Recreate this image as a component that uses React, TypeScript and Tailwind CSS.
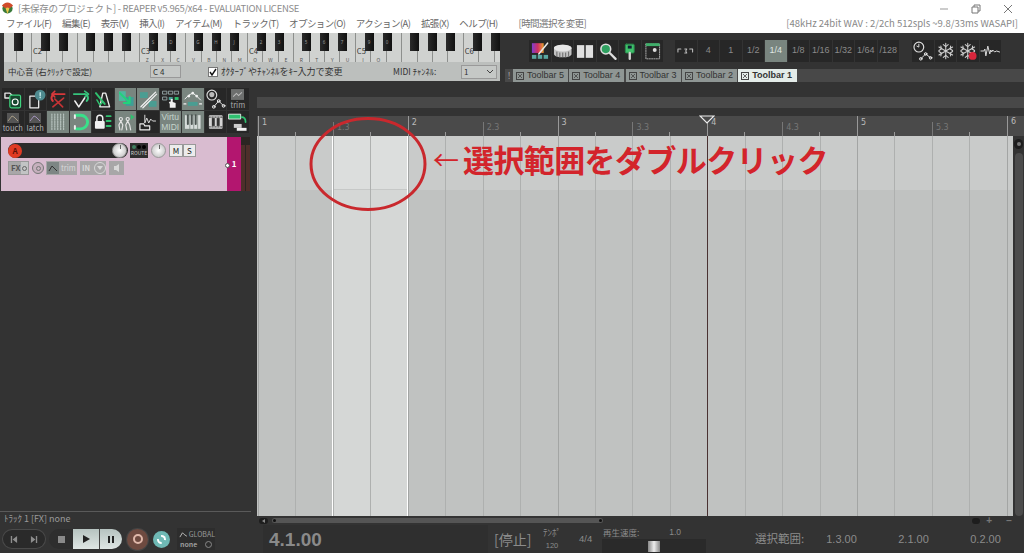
import React from "react";

const jp = { fontFamily: '"Noto Sans CJK JP","Noto Sans",sans-serif' };
const lib = { fontFamily: '"Liberation Sans",sans-serif' };

const menus = ["ファイル(F)", "編集(E)", "表示(V)", "挿入(I)", "アイテム(M)", "トラック(T)", "オプション(O)", "アクション(A)", "拡張(X)", "ヘルプ(H)"];

const whiteLetters: Record<number, string> = { 9: "Z", 10: "X", 11: "C", 12: "V", 13: "B", 14: "N", 15: "M", 16: "Q", 17: "W", 18: "E", 19: "R", 20: "T", 21: "Y", 22: "U", 23: "I", 24: "O" };
const octaveLabels: Record<number, string> = { 2: "C2", 9: "C3", 16: "C4", 23: "C5", 30: "C6" };
const blackKeys: [number, string][] = [
  [14, ""], [41, ""], [59, ""], [86, ""], [104, ""], [122, ""], [149, "S"], [167, "D"], [194, "G"], [212, "H"], [230, "J"], [257, "2"], [275, "3"], [302, "5"], [320, "6"], [338, "7"], [365, "9"], [383, "0"], [410, ""], [428, ""], [446, ""], [473, ""], [491, ""],
];

function Keyboard() {
  return (
    <div className="relative flex h-[29px] w-[496px] overflow-hidden bg-[#d2d4d2]">
      {Array.from({ length: 32 }).map((_, i) => (
        <div key={i} className={`relative h-full shrink-0 border-r border-[#8d8f8d] bg-[#d0d2d0] ${i === 0 ? "w-[12.57px]" : "w-[15.43px]"}`}>
          {octaveLabels[i] && <span className="absolute left-[1px] top-[14px] text-[7.5px] leading-[7px] text-[#333]" style={jp}>{octaveLabels[i]}</span>}
          {whiteLetters[i] && <span className="absolute bottom-0 left-0 w-full text-center text-[5px] leading-[5px] text-[#555]" style={jp}>{whiteLetters[i]}</span>}
        </div>
      ))}
      {blackKeys.map(([x, l]) => (
        <div key={x} className="absolute top-0 flex h-[18px] w-[9px] items-center justify-center bg-linear-to-r from-[#2b2b2b] to-[#111] text-[4.5px] text-[#999]" style={{ left: x - 4.5 }}>{l}</div>
      ))}
    </div>
  );
}

function Btn({ lit, children, w = "w-[22.5px]" }: { lit?: boolean; children?: React.ReactNode; w?: string }) {
  return (
    <div className={`flex h-[22px] shrink-0 items-center justify-center border-r border-[#333] ${w} ${lit ? "bg-[#79857f]" : "bg-[#272727]"}`}>
      {children}
    </div>
  );
}

function S({ children }: { children: React.ReactNode }) {
  return <svg viewBox="0 0 22 22" className="h-[22px] w-[22px]" fill="none" strokeLinecap="round" strokeLinejoin="round">{children}</svg>;
}

const row1 = [
  <S><path d="M3 5h5l2 2v3H3z" fill="none" stroke="#e8e8e8" strokeWidth="1.4" /><rect x="8" y="7" width="11" height="13" rx="1.5" fill="#17472f" stroke="#3fd17d" strokeWidth="1.2" /><circle cx="13.5" cy="14" r="3" stroke="#fff" strokeWidth="1.2" /></S>,
  <S><path d="M5 8h6l3 3v9H5z" fill="#2a2a2a" stroke="#eee" strokeWidth="1.3" /><circle cx="15.5" cy="7" r="5.5" fill="#4e8a8f" /><path d="M15.5 4.5v3M15.5 9v.6" stroke="#dff" strokeWidth="1.2" /></S>,
  <S><path d="M18 6H9a4 4 0 0 0-3 7" stroke="#d8393b" strokeWidth="2" /><path d="M8 3 5 6l3 3" stroke="#d8393b" strokeWidth="1.6" /><path d="m6 19 11-9M8 11l8 8" stroke="#c43335" strokeWidth="1.7" /></S>,
  <S><path d="M4 6h10a4 4 0 0 1 3 7" stroke="#36c47c" strokeWidth="2" /><path d="m15 3 4 3-4 3" stroke="#36c47c" strokeWidth="1.6" /><path d="m5 13 4 6 6-9" stroke="#eee" strokeWidth="1.6" /></S>,
  <S><path d="M11 5h3l4 14H8z" stroke="#eee" strokeWidth="1.4" /><path d="m4 5 9 11" stroke="#2fc06f" strokeWidth="2" /><path d="m5 12 3 5 3-3" stroke="#2fc06f" strokeWidth="1.5" /></S>,
  <S><rect x="4" y="3" width="7" height="10" fill="#4fb7a0" /><rect x="11" y="9" width="8" height="9" fill="#3d9f96" /><path d="m5 5 9 9M9 15h6V9" stroke="#22d37a" strokeWidth="2" /></S>,
  <S><rect x="3" y="4" width="8" height="6" fill="#4a9d92" /><rect x="12" y="13" width="8" height="6" fill="#4a9d92" /><path d="M4 19 19 4M6 20 20 6" stroke="#f2f2f2" strokeWidth="1.3" /></S>,
  <S><g fill="none" stroke="#9aa" strokeWidth=".9"><rect x="3" y="3" width="4" height="3" /><rect x="9" y="3" width="4" height="3" /><rect x="15" y="3" width="4" height="3" /><rect x="3" y="9" width="4" height="3" /></g><rect x="9" y="9" width="4" height="3" fill="#4a9d92" /><rect x="15" y="9" width="4" height="3" fill="#2fc06f" /><path d="M10 20v-4l-1-2 2-.5V11h2v3l3 1v5z" fill="#f1f1f1" /></S>,
  <S><path d="M3 11 7 7l4-2 4 3 4 4" stroke="#f1f1f1" strokeWidth="1" /><g fill="#f1f1f1"><circle cx="7" cy="8" r="1.4" /><circle cx="11" cy="5" r="1.4" /><circle cx="15" cy="8" r="1.4" /></g><rect x="6" y="14" width="10" height="4" fill="#4a9d92" /><path d="M2 16h2M18 16h2" stroke="#f1f1f1" strokeWidth="1.2" /></S>,
  <S><circle cx="7" cy="7" r="5" stroke="#ddd" strokeWidth="1.2" /><circle cx="7" cy="6.5" r="2.6" fill="#bbb" /><path d="M9 19 14 13l5 5" stroke="#ddd" strokeWidth="1" /><g fill="none" stroke="#eee" strokeWidth="1"><circle cx="9" cy="19" r="1.4" /><circle cx="14" cy="13" r="1.4" /><circle cx="19" cy="18" r="1.4" /></g></S>,
  <div className="flex flex-col items-center"><svg viewBox="0 0 12 10" className="h-[11px] w-[13px]"><rect width="12" height="10" fill="#6d6f6e" /><path d="m2 7 3-3 2 2 3-3" stroke="#bbb" fill="none" /></svg><span className="text-[7.5px] leading-[9px] text-[#aaa]" style={jp}>trim</span></div>,
];

function Env({ label, color }: { label: string; color: string }) {
  return (
    <div className="flex flex-col items-center">
      <svg viewBox="0 0 12 10" className="h-[10px] w-[12px]"><rect width="12" height="10" fill="#555" /><path d="m1 8 4-5 2 1 4 4" stroke={color} fill="none" /></svg>
      <span className="text-[7.5px] leading-[9px] text-[#b5b5b5]" style={jp}>{label}</span>
    </div>
  );
}

const row2: [boolean, React.ReactNode][] = [
  [false, <Env label="touch" color="#a59b84" />],
  [false, <Env label="latch" color="#a291bb" />],
  [true, <S>{[5, 8, 11, 14, 17].map((x) => <path key={x} d="M0 3v16" transform={`translate(${x} 0)`} stroke="#b8c4c0" strokeWidth="1.2" strokeDasharray="1.2 1.2" />)}</S>],
  [true, <S><path d="M6 4h5a6 6 0 0 1 0 14H6" stroke="#39e08a" strokeWidth="3" /><path d="M5 4v3M5 15v3" stroke="#eee" strokeWidth="2" /></S>],
  [false, <S><rect x="3" y="10" width="10" height="8" rx="1" fill="#f1f1f1" /><path d="M5 10V7a3 3 0 0 1 6 0v3" stroke="#f1f1f1" strokeWidth="1.5" /><path d="M15 5h4M15 10h4M15 15h4" stroke="#2fc06f" strokeWidth="2" /></S>],
  [true, <S><g stroke="#e4e4e4" strokeWidth="1.2"><circle cx="6" cy="8" r="1.6" /><path d="m6 10-2 4 1 5M6 10l2 4-1 5" /><circle cx="13" cy="8" r="1.6" /><path d="m13 10-2 4 1 5M13 10l2 4 1 5" /></g><path d="m16 3 4 3-4 3z" fill="#2fc06f" /></S>],
  [false, <S><path d="M8 4v8l2-5 2 5 2-4 2 2h3" stroke="#ddd" strokeWidth="1" /><path d="M3 19v-6h4l1 2h5v4z" stroke="#eee" strokeWidth="1.2" /></S>],
  [true, <div className="flex flex-col items-center text-[8.5px] leading-[10px] text-[#c4d4cc]" style={lib}><span>Virtu</span><span>MIDI</span></div>],
  [true, <S><rect x="3" y="4" width="16" height="14" fill="#d6dcda" />{[6, 10, 14].map((x) => <path key={x} d="M0 4v9" transform={`translate(${x} 0)`} stroke="#4c5552" strokeWidth="2" />)}{[8, 12, 16].map((x) => <path key={x} d="M0 4v14" transform={`translate(${x} 0)`} stroke="#79857f" strokeWidth=".8" />)}</S>],
  [false, <S><rect x="4" y="4" width="14" height="14" rx="1" fill="#d4d4d4" /><rect x="7" y="7" width="3" height="8" fill="#333" /><rect x="12" y="7" width="3" height="8" fill="#333" /><path d="M4 6h14M4 16h14" stroke="#333" strokeDasharray="1.5 1.5" /></S>],
  [false, <S><rect x="2" y="3" width="12" height="5" fill="#2fc06f" stroke="#fff" strokeWidth=".8" /><path d="M15 6c3 0 4 2 4 5" stroke="#2fc06f" strokeWidth="1.8" /><rect x="7" y="13" width="8" height="4" fill="#ccc" /><rect x="10" y="17" width="10" height="3" fill="#f2f2f2" /></S>],
];

const groupA = [
  <S><path d="M3 3h12v10H3z" fill="url(#rb)" /><defs><linearGradient id="rb" x1="0" x2="1"><stop stopColor="#7b3fd0" /><stop offset=".5" stopColor="#d02f60" /><stop offset="1" stopColor="#e6a030" /></linearGradient></defs><path d="m10 14 9-11" stroke="#e8e8e8" strokeWidth="1.6" /><g fill="#5aa7a0"><rect x="3" y="15" width="4.5" height="4" /><rect x="9" y="15" width="4.5" height="4" /><rect x="15" y="15" width="4.5" height="4" /></g></S>,
  <S><ellipse cx="11" cy="8" rx="9" ry="3.5" fill="#e2e2e2" /><path d="M2 8v6c0 2 4 3.5 9 3.5s9-1.5 9-3.5V8" fill="#c2c2c2" /><path d="M5 12v4M8 13v4M11 13v4M14 13v4M17 12v4" stroke="#666" /><ellipse cx="11" cy="8" rx="9" ry="3.5" fill="#e6e6e6" /></S>,
  <S><rect x="3" y="5" width="7.5" height="13" fill="#e0e0e0" /><rect x="12" y="5" width="7.5" height="13" fill="#e0e0e0" /></S>,
  <S><circle cx="9" cy="9" r="5" fill="#2fa060" stroke="#ddd" strokeWidth="1.6" /><path d="m13 13 6 6" stroke="#ddd" strokeWidth="2.4" /></S>,
  <S><rect x="6.5" y="4" width="9" height="9" rx="1" fill="#3fc06a" stroke="#2a8a4c" /><rect x="9" y="5.5" width="4" height="3" fill="#123" /><path d="M11 13v6" stroke="#d4d4d4" strokeWidth="2.4" /></S>,
  <S><rect x="4" y="4" width="14" height="15" stroke="#aaa" strokeDasharray="1.2 1.2" /><rect x="4" y="3" width="14" height="3" fill="#3fae6a" /><circle cx="13" cy="10" r="2" fill="#ddd" /></S>,
];

function Snow({ red }: { red?: boolean }) {
  return (
    <S>
      <g stroke="#cfcfcf" strokeWidth="1.1">
        <path d="M11 3v16M4 7l14 8M18 7 4 15" />
        <path d="m8.5 4.5 2.5 2 2.5-2M8.5 17.5l2.5-2 2.5 2M4 10.5 6.5 9 6 6M18 10.5 15.5 9l.5-3M4 11.5 6.5 13 6 16M18 11.5 15.5 13l.5 3" />
      </g>
      {red && <circle cx="16" cy="16" r="4" fill="#d8263c" />}
    </S>
  );
}

const groupC = [
  <S><circle cx="7" cy="7" r="5" stroke="#ddd" strokeWidth="1.2" /><path d="M7 4v3l-2-1" stroke="#ddd" /><path d="M9 19 14 14l5 4" stroke="#ddd" /><g stroke="#eee"><circle cx="9" cy="19" r="1.3" /><circle cx="14" cy="14" r="1.3" /><circle cx="19" cy="18" r="1.3" /></g></S>,
  <Snow />,
  <Snow red />,
  <S><path d="M1 11h3l1-2 1 7 2-10 2 8 1-4 1 2 1-2 2 2 2-1 3 1" stroke="#ddd" strokeWidth="1" /></S>,
];

const divs = ["4", "1", "1/2", "1/4", "1/8", "1/16", "1/32", "1/64", "/128"];
const tabs = ["Toolbar 5", "Toolbar 4", "Toolbar 3", "Toolbar 2"];

function TabBox() {
  return (
    <span className="relative mr-[3px] inline-block h-[8px] w-[8px] shrink-0 border border-[#444]">
      <svg viewBox="0 0 6 6" className="absolute inset-0 h-[6px] w-[6px]"><path d="m1 1 4 4M5 1 1 5" stroke="#444" strokeWidth=".8" /></svg>
    </span>
  );
}

function Header() {
  return (
    <header className="h-[33px] shrink-0 bg-white text-[#666]" style={jp}>
      <div className="flex h-[15px] items-center">
        <svg viewBox="0 0 14 14" className="ml-[1px] mt-[2px] h-[13px] w-[13px]">
          <circle cx="7" cy="7" r="5.5" fill="#3a7a3a" />
          <path d="M1 4a7 7 0 0 1 12 0L9 7a3 3 0 0 0-4 0z" fill="#d14b2a" />
          <path d="M5 7a2.5 2.5 0 0 1 4 0l-2 6z" fill="#e8c84a" />
        </svg>
        <span className="ml-[4px] mt-[3px] text-[9.5px] leading-none tracking-[-0.3px] text-[#8c8c8c]">[未保存のプロジェクト] - REAPER v5.965/x64 - EVALUATION LICENSE</span>
        <div className="ml-auto mr-[11px] mt-[3px] flex items-center gap-[22px]">
          <svg viewBox="0 0 10 10" className="h-[10px] w-[10px]"><path d="M1 5h8" stroke="#999" /></svg>
          <svg viewBox="0 0 10 10" className="h-[10px] w-[10px]"><path d="M1 3h6v6H1zM3 3V1h6v6H7" stroke="#777" fill="none" /></svg>
          <svg viewBox="0 0 10 10" className="h-[10px] w-[10px]"><path d="m1 1 8 8M9 1 1 9" stroke="#777" /></svg>
        </div>
      </div>
      <div className="flex h-[17px] items-center pl-[6px] pr-[6px] text-[9.5px] leading-none tracking-[-0.6px]">
        <div className="flex gap-[10.6px]">
          {menus.map((m) => <span key={m} className="whitespace-nowrap">{m}</span>)}
        </div>
        <span className="ml-[21px] text-[#777]">[時間選択を変更]</span>
        <span className="ml-auto whitespace-nowrap tracking-normal text-[#888]">[48kHz 24bit WAV : 2/2ch 512spls ~9.8/33ms WASAPI]</span>
      </div>
    </header>
  );
}

function TopBand() {
  return (
    <section className="flex h-[49px] shrink-0 bg-[#333]">
      <div className="ml-[4px] flex w-[496px] shrink-0 flex-col">
        <Keyboard />
        <div className="flex h-[19px] items-center bg-[#bcbfbd] pl-[4px] text-[8.5px] text-[#333]" style={jp}>
          <span className="w-[142px] whitespace-nowrap">中心音 (右ｸﾘｯｸで設定)</span>
          <span className="flex h-[13px] w-[31px] items-center border border-[#999] bg-[#c5c8c6] pl-[2px] text-[8px]">C 4</span>
          <span className="ml-[27px] flex h-[10px] w-[10px] items-center justify-center border border-[#777] bg-white">
            <svg viewBox="0 0 8 8" className="h-[8px] w-[8px]"><path d="m1 4 2 3 4-6" stroke="#111" strokeWidth="1.4" fill="none" /></svg>
          </span>
          <span className="ml-[3px] w-[172px] whitespace-nowrap text-[9px]">ｵｸﾀｰﾌﾞやﾁｬﾝﾈﾙをｷｰ入力で変更</span>
          <span className="w-[68px] whitespace-nowrap">MIDI ﾁｬﾝﾈﾙ:</span>
          <span className="flex h-[14px] w-[36px] items-center justify-between border border-[#999] bg-[#c5c8c6] px-[2px] text-[8px]">1
            <svg viewBox="0 0 8 5" className="h-[5px] w-[8px]"><path d="m1 1 3 3 3-3" stroke="#444" fill="none" /></svg>
          </span>
        </div>
      </div>
      <div className="ml-[5px] flex min-w-0 flex-1 flex-col">
        <div className="mt-[7px] flex pl-[24px]">
          <div className="flex">{groupA.map((g, i) => <Btn key={i}>{g}</Btn>)}</div>
          <div className="ml-[11px] flex">
            <Btn><S><path d="M3 9v3M3 9h3M10 9h2l-1 2 1 2h-2M15 9h3v3" stroke="#bbb" strokeWidth="1.1" /></S></Btn>
            {divs.map((d) => (
              <Btn key={d} lit={d === "1/4"}>
                <span className={`text-[9px] ${d === "1/4" ? "text-[#dfe6e2]" : "text-[#8a8a8a]"}`} style={lib}>{d}</span>
              </Btn>
            ))}
          </div>
          <div className="ml-[12px] flex">{groupC.map((g, i) => <Btn key={i}>{g}</Btn>)}</div>
        </div>
        <div className="mt-[7px] flex h-[13px] bg-[#484848] pl-[3px]">
          <span className="w-[5px] text-[8px] leading-[13px] text-[#aaa]">!</span>
          {tabs.map((t) => (
            <div key={t} className="mr-[1.3px] flex w-[55px] items-center whitespace-nowrap bg-[#8f9694] pl-[3px] text-[9px] text-[#333]" style={lib}>
              <TabBox />{t}
            </div>
          ))}
          <div className="flex w-[59px] items-center whitespace-nowrap bg-[#e4ece9] pl-[3px] text-[9px] font-bold text-[#333]" style={lib}>
            <TabBox />Toolbar 1
          </div>
        </div>
      </div>
    </section>
  );
}

function Knob() {
  return (
    <span className="relative block h-[15px] w-[15px] shrink-0 rounded-full border border-[#999] bg-radial from-[#fff] to-[#b8b8b8]">
      <span className="absolute left-1/2 top-[1px] h-[4px] w-px bg-[#666]" />
    </span>
  );
}

function Track() {
  return (
    <div className="ml-px mt-[4px] flex h-[54px] w-[250px]">
      <div className="flex w-[226px] flex-col bg-[#d9bcd0] pl-[7px] pt-[6px]">
        <div className="flex items-center">
          <div className="flex h-[15px] w-[120px] items-center justify-between rounded-full bg-[#2c2c2c] pr-[1px]">
            <span className="flex h-[14px] w-[14px] items-center justify-center rounded-full bg-[#e03b24] text-[8px] font-bold text-[#5a120a]" style={jp}>A</span>
            <Knob />
          </div>
          <div className="ml-[2px] flex h-[15px] w-[18px] flex-col items-center justify-center bg-[#2e2e2e]">
            <span className="flex gap-px"><i className="h-[4px] w-[4px] rounded-full bg-[#3f7f5f]" /><i className="h-[4px] w-[4px] rounded-full bg-black" /><i className="h-[4px] w-[4px] rounded-full bg-black" /></span>
            <span className="text-[5px] leading-[7px] text-[#ccc]" style={jp}>ROUTE</span>
          </div>
          <span className="ml-[3px]"><Knob /></span>
          <div className="ml-[3px] flex h-[13px]">
            <span className="flex w-[14px] items-center justify-center border border-[#999] bg-[#ececec] text-[8px] text-[#222]" style={jp}>M</span>
            <span className="flex w-[13px] items-center justify-center border border-[#999] bg-[#ececec] text-[8px] text-[#222]" style={jp}>S</span>
          </div>
        </div>
        <div className="mt-[3px] flex h-[14px] items-center">
          <div className="flex h-full w-[21px] items-center border border-[#999] bg-[#a8a7a8] text-[8px] font-bold text-[#555]" style={jp}>
            <span className="pl-[2px]">FX</span><span className="ml-px flex h-full flex-1 items-center justify-center bg-[#c2c4c4]"><i className="h-[5px] w-[5px] rounded-full border border-[#666]" /></span>
          </div>
          <span className="ml-[3px] flex h-[12px] w-[12px] items-center justify-center rounded-full border border-[#777] bg-[#c6b0bd]"><i className="h-[5px] w-[5px] rounded-full border border-[#777]" /></span>
          <div className="ml-[2px] flex h-full w-[31px] items-center bg-[#a8a7a8] text-[7.5px] text-[#d8d8d8]" style={jp}>
            <span className="ml-px flex h-[12px] w-[12px] items-center justify-center bg-[#7d8684]"><svg viewBox="0 0 10 8" className="h-[8px] w-[10px]"><path d="m1 7 3-5 2 2 3 3" stroke="#333" fill="none" /></svg></span>
            <span className="ml-[2px]">trim</span>
          </div>
          <div className="ml-[3px] flex h-full w-[26px] items-center justify-between bg-[#a8a7a8] pl-[2px] text-[7.5px] font-bold text-[#d8d8d8]" style={jp}>IN
            <span className="flex h-[12px] w-[12px] items-center justify-center rounded-full border border-[#d8d8d8]"><svg viewBox="0 0 8 6" className="h-[6px] w-[8px]"><path d="m1 1 3 4 3-4z" fill="#d8d8d8" /></svg></span>
          </div>
          <div className="ml-[3px] flex h-full w-[15px] items-center justify-center bg-[#a8a7a8]"><svg viewBox="0 0 10 10" className="h-[10px] w-[10px]"><path d="M2 3h2l3-2v8L4 7H2z" fill="#d8d8d8" /></svg></div>
        </div>
      </div>
      <div className="relative flex w-[14px] items-center justify-center bg-[#b3166f] text-[8px] font-bold text-white" style={jp}>
        <i className="absolute -left-[2px] top-[26px] h-[5px] w-[5px] rounded-full border border-[#555] bg-white" />
        1
      </div>
      <div className="flex w-[9px] gap-px bg-[#2b2522] pt-[8px]"><i className="h-full flex-1 bg-[#4e2f2a]" /><i className="h-full flex-1 bg-[#4e2f2a]" /></div>
    </div>
  );
}

function LeftPanel() {
  return (
    <aside className="flex w-[257px] shrink-0 flex-col pt-[6px]">
      <div className="ml-[2px] flex h-[22px]">
        {row1.map((c, i) => <Btn key={i} lit={i === 5 || i === 6 || i === 8}>{c}</Btn>)}
      </div>
      <div className="ml-[2px] mt-px flex h-[22px]">
        {row2.map(([l, c], i) => <Btn key={i} lit={l}>{c}</Btn>)}
      </div>
      <Track />
      <div className="flex-1" />
      <div className="h-px w-[251px] bg-[#5a5a5a]" />
      <div className="flex h-[13px] items-center pl-[4px] text-[9px] leading-none text-[#9a9a9a]" style={jp}>ﾄﾗｯｸ 1 [FX] none</div>
    </aside>
  );
}

function Arrange() {
  const cols = Array.from({ length: 21 });
  const labels: [string, boolean][] = [["1", true], ["1.3", false], ["2", true], ["2.3", false], ["3", true], ["3.3", false], ["4", true], ["4.3", false], ["5", true], ["5.3", false]];
  return (
    <main className="flex min-w-0 flex-1 flex-col">
      <div className="mt-[15px] h-[11px] shrink-0 bg-[#484848]" />
      <div className="mt-[8px] flex h-[20px] shrink-0 overflow-hidden bg-[#4a4a4a]">
        <div className="flex w-[750px] shrink-0 pl-px">
          {labels.map(([l, big]) => (
            <div key={l} className="flex h-full w-[74.88px] shrink-0 items-end">
              <div className={`relative w-[37.44px] shrink-0 border-l ${big ? "h-[20px] border-[#999]" : "h-[14px] border-[#777]"}`}>
                <span className={`absolute left-[3px] ${big ? "top-[1px] text-[#bbb]" : "top-0 text-[#777]"} text-[8px]`} style={{ fontFamily: '"DejaVu Sans",sans-serif' }}>{l}</span>
                <i className="absolute bottom-0 left-[36px] h-[4px] w-px bg-[#999]" />
              </div>
              <div className="w-[37.44px] shrink-0" />
            </div>
          ))}
        </div>
        <div className="relative border-l border-[#999] pl-[3px] text-[8px] text-[#bbb]" style={{ fontFamily: '"DejaVu Sans",sans-serif' }}>6</div>
      </div>
      <div className="flex min-h-0 flex-1">
        <div className="relative w-[756px] shrink-0 overflow-hidden bg-[#c0c2c1]">
          <div className="h-[54px] bg-[#c9cbca]" />
          <div className="absolute left-[75px] top-0 h-full w-[76px] border-x border-white bg-[#d5d7d6]">
            <div className="h-[54px] border-b border-[#c6c8c7] bg-[#dcdedd]" />
          </div>
          <div className="absolute inset-y-0 left-px flex">
            {cols.map((_, i) => (
              <div key={i} className={`h-full w-[37.44px] shrink-0 border-l-[1.5px] ${i % 4 === 0 ? "border-[#a3a5a4]" : "border-[#aeb0af]"}`} />
            ))}
          </div>
          <div className="absolute inset-y-0 left-[450px] w-px bg-[#4a3232]" />
        </div>
        <div className="flex w-[11px] flex-col items-center bg-[#333] pt-[1px]">
          <span className="mt-[2px] flex h-[10px] w-[9px] items-center justify-center rounded-full bg-[#1d1d1d]"><i className="h-[4px] w-[4px] rounded-sm bg-[#777]" /></span>
          <span className="mt-[4px] w-[8px] flex-1 rounded-sm bg-[#4c4c4c]" />
        </div>
      </div>
      <div className="flex h-[9px] shrink-0 items-center bg-[#333]">
        <span className="ml-[2px] flex h-[6px] w-[9px] items-center justify-center rounded-full bg-[#1d1d1d]"><i className="h-0 w-0 border-y-[2px] border-r-[3px] border-y-transparent border-r-[#888]" /></span>
        <div className="ml-[4px] flex h-[5px] w-[331px] items-center justify-between rounded-sm bg-[#555] px-px"><i className="h-[3px] w-[3px] rounded-full bg-[#111]" /><i className="h-[3px] w-[3px] rounded-full bg-[#111]" /></div>
        <div className="ml-auto mr-[12px] flex items-center gap-[6px] text-[10px] font-bold text-[#777]" style={lib}>
          <i className="h-[6px] w-[8px] rounded-full bg-[#1d1d1d]" /><span className="leading-[8px]">+</span><span className="ml-[8px] leading-[8px]">−</span>
        </div>
      </div>
    </main>
  );
}

function Transport() {
  return (
    <footer className="flex h-[28px] shrink-0 items-center bg-[#333] text-[#8b8b8b]" style={jp}>
      <div className="ml-[3px] flex h-[18px] w-[42px] items-center justify-around rounded-full bg-[#2a2a2a] ring-1 ring-[#4a4a4a]">
        <svg viewBox="0 0 10 10" className="h-[9px] w-[9px]"><path d="M2 1h1.5v8H2zM9 1v8L4 5z" fill="#8d8d8d" /></svg>
        <svg viewBox="0 0 10 10" className="h-[9px] w-[9px]"><path d="M8 1H6.5v8H8zM1 1v8l5-4z" fill="#8d8d8d" /></svg>
      </div>
      <div className="ml-[4px] flex h-[20px] w-[73px] items-center overflow-hidden rounded-full">
        <div className="flex h-full w-[24px] items-center justify-center bg-[#2e2e2e]"><i className="h-[7px] w-[7px] bg-[#8a8a8a]" /></div>
        <div className="flex h-full w-[27px] items-center justify-center border-r border-[#444] bg-linear-to-b from-[#b6c3c0] to-[#dfe6e4]"><i className="h-0 w-0 border-y-[4px] border-l-[7px] border-y-transparent border-l-[#222]" /></div>
        <div className="flex h-full flex-1 items-center justify-center gap-px bg-linear-to-b from-[#b6c3c0] to-[#dfe6e4]"><i className="h-[7px] w-[2px] bg-[#222]" /><i className="ml-px h-[7px] w-[2px] bg-[#222]" /></div>
      </div>
      <div className="ml-[5px] flex h-[21px] w-[21px] items-center justify-center rounded-full bg-[#6e4a40] ring-1 ring-[#444]"><i className="h-[10px] w-[10px] rounded-full border-2 border-[#e0b8aa]" /></div>
      <div className="ml-[5px] flex h-[17px] w-[17px] items-center justify-center rounded-full bg-[#6fb9b5]"><i className="h-[9px] w-[9px] rounded-full border-2 border-dashed border-white" /></div>
      <div className="ml-[7px] flex h-[22px] w-[38px] flex-col justify-center bg-[#2d2d2d] text-[7px] leading-[10px] text-[#999]">
        <div className="flex items-center gap-px pl-[2px]"><svg viewBox="0 0 10 8" className="h-[7px] w-[9px]"><path d="m1 7 3-5 2 2 3 2" stroke="#ccc" fill="none" /></svg>GLOBAL</div>
        <div className="flex items-center justify-between px-[3px] font-bold">none<i className="h-[7px] w-[7px] rounded-full border border-[#888]" /></div>
      </div>
      <div className="ml-[48px] flex h-full w-[225px] items-center bg-[#2f2f2f] pl-[6px] text-[19px] font-bold leading-none text-[#8a8a8a]" style={lib}>4.1.00</div>
      <span className="ml-[6px] w-[34px] whitespace-nowrap text-[14px] leading-none text-[#8b8b8b]">[停止]</span>
      <div className="ml-[15px] flex h-full w-[18px] flex-col items-center justify-center text-[9px] leading-[13px]"><span className="whitespace-nowrap">ﾃﾝﾎﾟ</span><span className="text-[7.5px]" style={lib}>120</span></div>
      <span className="ml-[18px] w-[14px] whitespace-nowrap text-[9.5px]" style={lib}>4/4</span>
      <div className="ml-[9px] flex h-full w-[104px] flex-col">
        <div className="flex h-[14px] items-center justify-between pl-px pr-[25px] text-[8.5px]"><span>再生速度:</span><span style={lib}>1.0</span></div>
        <div className="flex h-[14px] items-center justify-center bg-[#2a2a2a]"><i className="h-[11px] w-[12px] bg-linear-to-r from-[#888] via-[#eee] to-[#888]" /></div>
      </div>
      <span className="ml-[49px] whitespace-nowrap text-[11.5px] leading-none">選択範囲:</span>
      <span className="ml-[22px] w-[72px] text-[11px]" style={lib}>1.3.00</span>
      <span className="w-[72px] text-[11px]" style={lib}>2.1.00</span>
      <span className="text-[11px]" style={lib}>0.2.00</span>
    </footer>
  );
}

export default function App() {
  return (
    <div className="relative flex h-[553px] w-[1024px] flex-col overflow-hidden bg-[#333]">
      <Header />
      <TopBand />
      <div className="flex min-h-0 flex-1">
        <LeftPanel />
        <Arrange />
      </div>
      <Transport />
      <svg viewBox="0 0 120 100" className="absolute left-[309px] top-[114px] h-[100px] w-[120px]">
        <ellipse cx="59" cy="50" rx="57" ry="45.5" fill="none" stroke="#c9282d" strokeWidth="3" />
      </svg>
      <div className="absolute left-[433px] top-[138px] flex items-center whitespace-nowrap leading-[42px] text-[#d3242b]" style={jp}>
        <span className="mr-[4px] text-[26px] font-normal">←</span>
        <span className="text-[31px] font-bold tracking-[-0.6px]">選択範囲をダブルクリック</span>
      </div>
      <svg viewBox="0 0 16 9" className="absolute left-[699px] top-[115px] h-[9px] w-[16px]"><path d="M1 1h14L8 8z" fill="#4a4a4a" stroke="#eee" strokeWidth="1.2" /></svg>
    </div>
  );
}
